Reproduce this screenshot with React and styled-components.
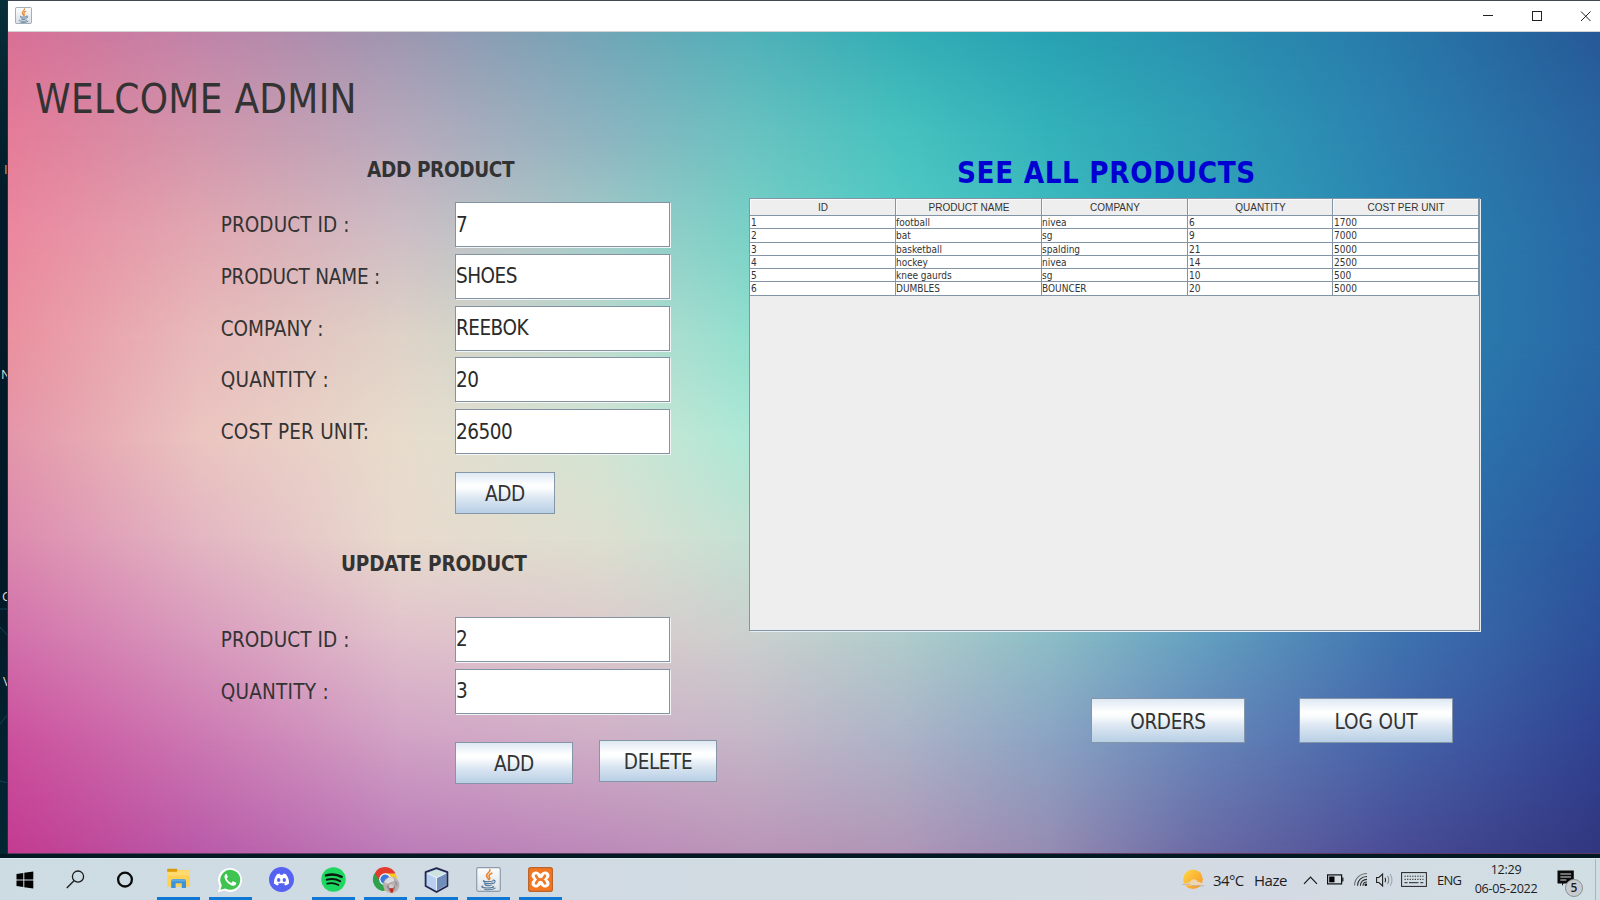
import React from 'react';
import styled, { createGlobalStyle } from 'styled-components';

const GlobalStyle = createGlobalStyle`
  * { box-sizing: border-box; }
  html, body { margin: 0; padding: 0; }
  body { width: 1600px; height: 900px; overflow: hidden; background: #021c28; }
`;

const FORM_FONT = '"DejaVu Sans Condensed", "DejaVu Sans", sans-serif';
const SHELL_FONT = '"Open Sans", "Noto Sans", sans-serif';

/* ---------- desktop and window ---------- */

const Screen = styled.div`
  width: 1600px;
  height: 900px;
  display: grid;
  grid-template-columns: 8px 1fr;
  grid-template-rows: 854px 4px 42px;
  background: #021923;
  overflow: hidden;
`;

const DesktopEdge = styled.div`
  position: relative;
  overflow: hidden;
  background: linear-gradient(180deg, #06303a 0, #042631 70px, #021b2a 200px, #021826 560px, #032633 854px);
  border-right: 1px solid #20303c;
`;

const DesktopLabel = styled.span`
  position: absolute;
  left: ${(p) => p.$x}px;
  top: ${(p) => p.$y}px;
  color: ${(p) => p.$color || '#d8d8d4'};
  font: 13px/14px ${SHELL_FONT};
`;

const DesktopLines = styled.svg`
  position: absolute;
  left: 0;
  top: 600px;
  width: 8px;
  height: 200px;
`;

const Window = styled.main`
  display: grid;
  grid-template-rows: 32px 1fr;
  min-width: 0;
`;

const TitleBar = styled.header`
  display: flex;
  align-items: center;
  background: #fff;
  border-top: 1px solid #3f4a54;
  border-bottom: 1px solid #d5d0d6;
  padding: 0 0 1px 7px;
`;

const Spacer = styled.div`
  flex: 1;
`;

const Caption = styled.svg`
  width: 12px;
  height: 12px;
  margin-right: ${(p) => p.$after}px;
  fill: none;
  stroke: #222;
`;

const Stage = styled.div`
  display: grid;
  overflow: hidden;
  border-bottom: 1px solid #5b3a62;
  & > * { grid-area: 1 / 1; }
`;

const Backdrop = styled.div`
  display: grid;
  width: 1592px;
  height: 821px;
  isolation: isolate;
  & > * { grid-area: 1 / 1; }
`;

const Band = styled.div`
  background: linear-gradient(90deg, ${(p) => p.$stops});
  ${(p) =>
    p.$to > 0 &&
    `mask-image: linear-gradient(180deg, transparent ${p.$from}px, #000 ${p.$to}px);`}
`;

const COLUMNS = [0, 192, 392, 592, 742, 892, 1042, 1192, 1392, 1592];
const BANDS = [
  [0, ['#d97095', '#c184a9', '#9e97b1', '#72a6b7', '#51b1b9', '#34aeb5', '#28a2b3', '#2a92b0', '#2878aa', '#265997']],
  [103, ['#e57c99', '#d295ab', '#b7a9bc', '#8db4c0', '#69c2c0', '#47c2bf', '#34b2ba', '#2fa0b6', '#2b80b0', '#29639f']],
  [208, ['#eb889f', '#e2a9b2', '#cfbfc5', '#a4cdc9', '#7ad2c7', '#55ccc6', '#3ebdc0', '#33a6ba', '#2a86b2', '#2868a4']],
  [308, ['#ea919f', '#e8babb', '#dfd3c7', '#c0dccf', '#93e0cf', '#70d6ca', '#4fc4c4', '#3caabb', '#2a84b1', '#2968a5']],
  [408, ['#e496aa', '#ebc5c0', '#e8dccd', '#d3e5d4', '#ade8d6', '#88dccf', '#60c8c8', '#46acbd', '#2c7caf', '#2961a3']],
  [508, ['#dc8aae', '#e3b6c2', '#e8dacd', '#dddfd0', '#c4e1d4', '#9fd8d0', '#7cc8ca', '#58aac0', '#3274ad', '#2a589e']],
  [608, ['#d26fab', '#d899bc', '#e0c0cb', '#dcc9cb', '#cbcfce', '#b0cbcb', '#8cbcc6', '#649fc0', '#3e72af', '#2d4f99']],
  [708, ['#cb509d', '#cc78b2', '#d1a2c5', '#cfafc7', '#c5b6c7', '#acb3c7', '#8aa3c3', '#6785b9', '#4563a8', '#304291']],
  [821, ['#c33b90', '#b95aa9', '#bb7cb8', '#bc89b9', '#ba95b8', '#b096b7', '#958bb2', '#6b6ba5', '#494b96', '#31367f']],
];

/* ---------- admin panel ---------- */

const Panel = styled.div`
  z-index: 1;
  display: grid;
  grid-template-columns: 741px 732px;
  font-family: ${FORM_FONT};
  font-stretch: condensed;
  color: #333;
`;

const Column = styled.section`
  display: flex;
  flex-direction: column;
  align-items: flex-start;
`;

const Welcome = styled.h1`
  margin: 44px 0 0 27px;
  font-size: 40px;
  line-height: 47px;
  font-weight: 400;
  letter-spacing: 0.3px;
  white-space: nowrap;
`;

const SectionTitle = styled.h2`
  margin: ${(p) => p.$top}px 0 ${(p) => p.$bottom}px ${(p) => p.$left}px;
  font-size: 20.5px;
  line-height: 24px;
  font-weight: 700;
  letter-spacing: ${(p) => p.$ls}px;
  white-space: nowrap;
`;

const Fields = styled.div`
  display: grid;
  row-gap: ${(p) => p.$gap}px;
  margin-left: 212px;
`;

const Row = styled.label`
  display: grid;
  grid-template-columns: 235px 215px;
  align-items: start;
  height: 45px;
  font-size: 20.5px;
  line-height: 46px;
  white-space: nowrap;
`;

const Caption_ = styled.span`
  padding-left: 0.7px;
  letter-spacing: ${(p) => p.$ls}px;
`;

const Input = styled.input`
  width: 215px;
  height: 45px;
  padding: 0;
  border: 1px solid #8393a3;
  border-radius: 0;
  outline: 0;
  background: #fff;
  box-shadow: 1px 1px 0 #f3f5f5;
  font-family: inherit;
  font-stretch: inherit;
  font-size: 20.5px;
  letter-spacing: -0.5px;
  color: #2b2b2b;
`;

const Button = styled.button`
  width: ${(p) => p.$w}px;
  height: ${(p) => p.$h || 42}px;
  margin-top: ${(p) => p.$drop || 0}px;
  padding: 2px 0 0;
  border: 1px solid #8496a8;
  border-radius: 0;
  background: linear-gradient(180deg, #dde8f3 0%, #fff 30%, #fafcfd 40%, #dce7f2 62%, #b8cfe5 100%);
  font: inherit;
  font-size: 20.5px;
  letter-spacing: ${(p) => p.$ls || -0.4}px;
  color: #333;
`;

const Actions = styled.div`
  display: flex;
  align-items: flex-start;
  gap: ${(p) => p.$gap || 0}px;
  margin: ${(p) => p.$top}px 0 0 ${(p) => p.$left}px;
`;

const ListTitle = styled.h2`
  margin: 124px 0 8px 208px;
  font-size: 29.3px;
  line-height: 34px;
  font-weight: 700;
  letter-spacing: 0.62px;
  color: #0000d2;
  white-space: nowrap;
`;

const ScrollPane = styled.div`
  width: 731px;
  height: 433px;
  background: #eee;
  border: 1px solid #8295a6;
  box-shadow: 1px 1px 0 #e7eef2;
`;

const Grid = styled.div`
  display: grid;
  grid-template-columns: 146px 146px 146px 145px 146px;
  width: 729px;
`;

const HeadCell = styled.div`
  height: 17px;
  padding-left: 1px;
  border-right: 1px solid #8295a6;
  border-bottom: 1px solid #8295a6;
  box-shadow: inset 1px 1px 0 #fafafa;
  text-align: center;
  font: 10px/18px "Liberation Sans", Arial, sans-serif;
  letter-spacing: 0;
`;

const Cell = styled.div`
  height: 13.3px;
  border-right: 1px solid #8295a6;
  border-bottom: 1px solid #8295a6;
  background: #fff;
  padding-left: ${(p) => (p.$first ? 1 : 0)}px;
  font-size: 10px;
  line-height: 13px;
`;

/* ---------- taskbar ---------- */

const Taskbar = styled.footer`
  grid-column: 1 / -1;
  grid-row: 3;
  display: flex;
  height: 42px;
  padding-right: 4px;
  border-top: 1px solid #dfe8eb;
  background: linear-gradient(90deg, #cddce3 0%, #d0dae2 30%, #d2dbe2 60%, #d4dae3 80%, #d0dfe4 100%);
  font-family: ${SHELL_FONT};
  color: #1d1d1f;
`;

const Launcher = styled.div`
  display: flex;
  align-items: center;
  justify-content: center;
  width: 50px;
`;

const AppButton = styled.div`
  display: flex;
  flex-direction: column;
  align-items: center;
  justify-content: space-between;
  width: 51.7px;
  padding-top: 8px;
  svg { display: block; }
  &::after {
    content: '';
    width: 43px;
    height: 3px;
    background: ${(p) => (p.$running ? '#0f78d4' : 'transparent')};
  }
`;

const Pinned = styled.div`
  display: flex;
  margin-left: 2.7px;
`;

const Tray = styled.div`
  display: flex;
  align-items: center;
  width: 414px;
  border-right: 1px solid #a9b5bb;
`;

const Slot = styled.div`
  flex: none;
  width: ${(p) => p.$w}px;
  height: 24px;
  display: flex;
  align-items: center;
  white-space: nowrap;
`;

const Weather = styled.span`
  font-size: 15px;
  letter-spacing: ${(p) => p.$ls}px;
`;

const Lang = styled.span`
  font-size: 13px;
  letter-spacing: -0.7px;
`;

const Clock = styled.div`
  flex: none;
  width: 72px;
  margin-right: 15px;
  margin-top: -1px;
  text-align: center;
  font-size: 12.6px;
  line-height: 19px;
  letter-spacing: -0.3px;
  white-space: nowrap;
`;

const Notice = styled.div`
  position: relative;
  width: 30px;
  height: 28px;
  padding-top: 4px;
`;

const Badge = styled.span`
  position: absolute;
  left: 8px;
  top: 13px;
  width: 18px;
  height: 18px;
  border: 1px solid #8b9093;
  border-radius: 50%;
  background: #c9cccf;
  font-size: 12px;
  font-weight: 600;
  line-height: 16px;
  text-align: center;
`;

/* ---------- icons ---------- */

const JavaIcon = ({ size }) => (
  <svg width={size} height={size} viewBox="0 0 25 25">
    <defs>
      <linearGradient id={`tile${size}`} x1="0" y1="0" x2="0" y2="1">
        <stop offset="0" stopColor="#fdfdfd" />
        <stop offset="1" stopColor="#d9e0e5" />
      </linearGradient>
    </defs>
    <rect x=".7" y=".7" width="23.6" height="23.6" rx="1.8" fill={`url(#tile${size})`} stroke="#8c9cab" strokeWidth="1.2" />
    <path d="M13.9 2.6c1 2.5-4.6 4-3.2 6.8.5 1 1.500 1.500 1.700 2.800M15.800 6.300c-2.200.9-3.700 2.200-2.300 4 .6.8.3 1.600-.4 2.300" fill="none" stroke="#e9822c" strokeWidth="1.600" strokeLinecap="round" />
    <path d="M8 13.500c-2 .8 1 1.200 4.300 1.100 2 0 4.200-.3 4.700-.7M8.300 15.600c-.5 1.300 6 1.300 7.800.4M8.900 17.700c.3 1.100 4.700 1.100 6.400.3M17 13.300c3-.6 2.700 2.600-.5 3.300M6.600 19c-3 1.400 3 2.200 7 1.900 3.300-.2 5-.9 3.300-1.600M8.800 22.500c4 .5 8.500.1 10.200-1.400" fill="none" stroke="#55799a" strokeWidth="1.200" strokeLinecap="round" />
  </svg>
);

const WindowsIcon = () => (
  <svg width="18" height="18" viewBox="0 0 18 18">
    <path d="M.5 2.900 7.300 2v6.600H.5zM8.300 1.800 17.300.5v8.100h-9zM.5 9.500h6.800V16L.5 15.100zM8.300 9.500h9v8l-9-1.300z" fill="#000" />
  </svg>
);

const SearchIcon = () => (
  <svg width="19" height="19" viewBox="0 0 19 19" fill="none" stroke="#1a1a1a" strokeWidth="1.300">
    <circle cx="12" cy="6.600" r="5.600" />
    <path d="M8 10.700.8 18" />
  </svg>
);

const CortanaIcon = () => (
  <svg width="18" height="18" viewBox="0 0 18 18">
    <circle cx="9" cy="8.600" r="6.900" fill="none" stroke="#0a0a0a" strokeWidth="2.300" />
  </svg>
);

const FolderIcon = () => (
  <svg width="25" height="25" viewBox="0 0 25 25">
    <path d="M1.200 2.600q0-.8.800-.8h8.500q.8 0 .8.800v3H1.200z" fill="#dc9a08" />
    <path d="M1.200 4.800h9.300l1.600-1.700h10.700q.9 0 .9.900v15.800H1.200z" fill="#ffd056" />
    <path d="M1.200 5.200h9.300l1.600-1.700h11.600v5H1.200z" fill="#ffda70" />
    <path d="M5.200 20.900v-6.500q0-2.200 2.200-2.200h10.400q2.200 0 2.200 2.200v6.500h-4.200v-4.700H9.600v4.700z" fill="#3c92d6" />
    <path d="M5.200 14.600q0-2.400 2.200-2.400h10.400q2.200 0 2.200 2.400z" fill="#58a9e4" />
  </svg>
);

const WhatsAppIcon = () => (
  <svg width="26" height="26" viewBox="0 0 26 26">
    <path d="M.8 25.300 2.600 19a12 12 0 1 1 4.800 4.600z" fill="#fff" />
    <path d="M3.500 22.700l1.300-4.500a10 10 0 1 1 3.600 3.400z" fill="#3fc351" />
    <path d="M9.200 7.100c-.9.200-1.800 1.200-1.700 2.900.2 3.700 5 8.500 8.600 8.700 1.800.1 2.900-1 3.100-2.100.1-.7 0-.8-.4-1l-2.400-1.200c-.4-.2-.7-.1-.9.200l-1.100 1.300c-2-.6-3.900-2.400-4.700-4.300l.9-1.200c.2-.3.2-.6.100-.9L9.900 7.500c-.1-.3-.4-.4-.7-.4z" fill="#fff" />
  </svg>
);

const DiscordIcon = () => (
  <svg width="25" height="25" viewBox="0 0 25 25">
    <circle cx="12.500" cy="12.500" r="12.500" fill="#5662f2" />
    <path d="M8 7.300 10.500 6.600l.6 1.100h2.900l.6-1.100L17 7.300c1.900 2.400 3.200 5.700 3.100 9.100-1.200 1-2.500 1.600-4 2l-.9-1.500 1-.6H8.800l1 .6-.9 1.500c-1.500-.4-2.800-1-4-2C4.800 13 6.100 9.700 8 7.300z" fill="#fff" />
    <ellipse cx="9.700" cy="13" rx="1.700" ry="1.900" fill="#5662f2" />
    <ellipse cx="15.300" cy="13" rx="1.700" ry="1.900" fill="#5662f2" />
  </svg>
);

const SpotifyIcon = () => (
  <svg width="25" height="25" viewBox="0 0 25 25">
    <circle cx="12.500" cy="12.500" r="12.200" fill="#1ed760" />
    <g fill="none" stroke="#08180d" strokeLinecap="round">
      <path d="M5 8.400c5-1.500 11.300-1 15.600 1.500" strokeWidth="2.500" />
      <path d="M5.700 12.700c4.400-1.200 9.700-.7 13.400 1.500" strokeWidth="2.100" />
      <path d="M6.200 16.600c3.900-.9 8-.5 11.300 1.400" strokeWidth="1.700" />
    </g>
  </svg>
);

const ChromeIcon = () => (
  <svg width="25" height="27" viewBox="0 0 25 27" overflow="visible">
    <path d="M12.200 12.300 1.400 6.600A11.600 11.600 0 0 0 11.500 24l6-9z" fill="#2da14b" />
    <path d="M12.200 12.300h11.500A11.600 11.600 0 0 1 11.500 24z" fill="#f9c623" />
    <path d="M12.200 6.200h9.800l1.700 3-.2 4h-10z" fill="#f9c623" />
    <path d="M1.700 6.400A11.600 11.600 0 0 1 22.500 6.600H12.200L7 14z" fill="#e33b2e" />
    <circle cx="12.200" cy="12.300" r="6" fill="#fff" />
    <circle cx="12.200" cy="12.300" r="4.800" fill="#3a78e0" />
    <circle cx="18.300" cy="18" r="8.200" fill="#b9b2b5" />
    <path d="M11.500 15q3-5 8-4.800l2 3.300-7 3.200z" fill="#dedcde" />
    <path d="M13.500 19.500q2-3.500 5-3t4 3.500l-1.500 4h-5z" fill="#948a8f" />
    <path d="M15.500 18q3-2 5.500.5l-1 2.500h-3.500z" fill="#d7cbc8" />
    <path d="m16.300 21.500 4-.3-.5 4.500h-2z" fill="#c52a1e" />
    <path d="m21.500 13 3 3-.5 4-2-3z" fill="#9a97a2" />
  </svg>
);

const CubeIcon = () => (
  <svg width="25" height="26" viewBox="0 0 25 26">
    <path d="M12.500 1.200 23.400 5.200V19L12.500 25 1.600 19V5.200z" fill="#a9c3ea" stroke="#24264e" strokeWidth="1.800" strokeLinejoin="round" />
    <path d="M12.500 2.700 22 6l-9.500 4.700L3 6z" fill="#cfe3df" />
    <path d="M2.900 6.600 12 11v12.300L2.900 18.300z" fill="#b9cff2" />
    <path d="M13 11l9.100-4.400v11.700L13 23.300z" fill="#6f8fba" />
    <path d="M3 6.200l9.500 4.600L22 6.200M12.500 10.800v12.500" fill="none" stroke="#f2f7fb" strokeWidth=".9" />
  </svg>
);

const XamppIcon = () => (
  <svg width="25" height="25" viewBox="0 0 25 25">
    <rect x=".6" y=".6" width="23.800" height="23.800" rx="2.200" fill="#f37623" stroke="#b9652b" strokeWidth="1.200" />
    <g fill="none" strokeLinecap="round">
      <path d="M7.700 8.600 17.300 16.400M17.300 8.600 7.700 16.400" stroke="#fff" strokeWidth="8.400" />
      <path d="M8 8.600q1.400 3.900 4.500 3.900T17 8.600M8 16.400q1.400-3.900 4.500-3.900t4.500 3.900" stroke="#f37623" strokeWidth="2.600" />
    </g>
  </svg>
);

const WeatherIcon = () => (
  <svg width="24" height="22" viewBox="0 0 24 22">
    <defs>
      <linearGradient id="sun" x1="0" y1="0" x2="1" y2="1">
        <stop offset="0" stopColor="#ffd84a" />
        <stop offset="1" stopColor="#f7931e" />
      </linearGradient>
    </defs>
    <circle cx="11" cy="10.200" r="9.800" fill="url(#sun)" />
    <path d="M1 16.600Q0 15 4 14l4-.8q1-3.300 4.500-3 2.500.2 3.300 2.600 2.200-.3 3.200 1l4 .9q.5 1-4 1.300l-4 .6z" fill="#ead9bd" opacity=".92" />
    <path d="M.3 15.300h8M9.500 16.800H22" stroke="#bfae9c" strokeWidth=".9" />
  </svg>
);

const ChevronIcon = () => (
  <svg width="15" height="10" viewBox="0 0 15 10">
    <path d="m1 8.800 6.500-6.700L14 8.800" fill="none" stroke="#1b1b1b" strokeWidth="1.200" />
  </svg>
);

const BatteryIcon = () => (
  <svg width="17" height="11" viewBox="0 0 17 11">
    <rect x=".6" y=".9" width="14" height="9" fill="none" stroke="#111" strokeWidth="1.200" />
    <rect x="2.200" y="2.500" width="5.300" height="5.800" fill="#000" />
    <path d="M15.800 3.500v4" stroke="#111" strokeWidth="1.200" />
  </svg>
);

const WifiIcon = () => (
  <svg width="15" height="15" viewBox="0 0 15 15" fill="none" stroke="#2a2d2f" strokeWidth="1.100">
    <path d="M.6 13.500C.6 6.500 6 1.500 13 1.500" stroke="#6b7276" />
    <path d="M3.500 13.700C3.500 8.200 7.500 4.500 13 4.500M6.400 13.700c0-3.700 2.700-6.300 6.600-6.300M9 13.700c0-2.200 1.500-3.700 4-3.700" />
    <circle cx="11.800" cy="12.700" r="1.300" fill="#111" stroke="none" />
  </svg>
);

const SpeakerIcon = () => (
  <svg width="18" height="16" viewBox="0 0 18 16" fill="none" stroke="#222" strokeWidth="1.100">
    <path d="M.6 5.500h2.300L6.600 2v12l-3.700-3.500H.6z" />
    <path d="M9 5.800q1.300 2.200 0 4.400" />
    <path d="M11.500 4q2.600 4 0 8" stroke="#7c8488" />
    <path d="M14 2q4 6 0 12" stroke="#9da6ab" />
  </svg>
);

const KeyboardIcon = () => (
  <svg width="26" height="15" viewBox="0 0 26 15" fill="none" stroke="#222">
    <rect x=".6" y=".6" width="24.800" height="13.800" />
    <path d="M3.500 4.200h19" strokeDasharray="1.300 1.250" />
    <path d="M3.500 7.300h19" strokeDasharray="1.300 1.250" />
    <path d="M3.500 10.700h3M8 10.700h9.500M19.300 10.700h3" />
  </svg>
);

const NoticeIcon = () => (
  <svg width="18" height="17" viewBox="0 0 18 17">
    <path d="M.5.500h16.300v13H6.500L5 16v-2.500H.5z" fill="#0a0a0a" />
    <path d="M3.300 4h10.800M3.300 7h10.800M3.300 10h6" stroke="#d3dce2" strokeWidth="1.100" />
  </svg>
);

/* ---------- data ---------- */

const PRODUCT_FIELDS = [
  ['PRODUCT ID :', '7', 0.08],
  ['PRODUCT NAME :', 'SHOES', -0.2],
  ['COMPANY :', 'REEBOK', 0],
  ['QUANTITY :', '20', 0.25],
  ['COST PER UNIT:', '26500', 0.2],
];

const UPDATE_FIELDS = [
  ['PRODUCT ID :', '2', 0.08],
  ['QUANTITY :', '3', 0.25],
];

const HEADINGS = ['ID', 'PRODUCT NAME', 'COMPANY', 'QUANTITY', 'COST PER UNIT'];

const PRODUCTS = [
  ['1', 'football', 'nivea', '6', '1700'],
  ['2', 'bat', 'sg', '9', '7000'],
  ['3', 'basketball', 'spalding', '21', '5000'],
  ['4', 'hockey', 'nivea', '14', '2500'],
  ['5', 'knee gaurds', 'sg', '10', '500'],
  ['6', 'DUMBLES', 'BOUNCER', '20', '5000'],
];

const APPS = [FolderIcon, WhatsAppIcon, DiscordIcon, SpotifyIcon, ChromeIcon, CubeIcon, () => <JavaIcon size={25} />, XamppIcon];

const FieldRows = ({ rows, gap }) => (
  <Fields $gap={gap}>
    {rows.map(([label, value, spacing]) => (
      <Row key={label}>
        <Caption_ $ls={spacing}>{label}</Caption_>
        <Input defaultValue={value} />
      </Row>
    ))}
  </Fields>
);

export default function App() {
  return (
    <>
      <GlobalStyle />
      <Screen>
        <DesktopEdge>
          <DesktopLabel $x={4} $y={162} $color="#d0a860">I</DesktopLabel>
          <DesktopLabel $x={1} $y={367}>N</DesktopLabel>
          <DesktopLabel $x={2} $y={589}>C</DesktopLabel>
          <DesktopLabel $x={3} $y={674}>V</DesktopLabel>
          <DesktopLines viewBox="0 0 8 200" fill="none" stroke="#124354">
            <path d="M0 9h8M0 27l8 9M0 124l8-10M0 181l8 2" />
          </DesktopLines>
        </DesktopEdge>

        <Window>
          <TitleBar>
            <JavaIcon size={17} />
            <Spacer />
            <Caption $after={37} viewBox="0 0 12 12"><path d="M1 5.500h10" /></Caption>
            <Caption $after={37} viewBox="0 0 12 12"><rect x="1.500" y="1.500" width="9" height="9" /></Caption>
            <Caption $after={8} viewBox="0 0 12 12"><path d="m1 1.500 9.500 9.500M10.500 1.500 1 11" /></Caption>
          </TitleBar>

          <Stage>
            <Backdrop>
              {BANDS.map(([y, colors], i) => (
                <Band
                  key={y}
                  $from={i ? BANDS[i - 1][0] : 0}
                  $to={y}
                  $stops={colors.map((c, k) => `${c} ${COLUMNS[k]}px`).join(', ')}
                />
              ))}
            </Backdrop>

            <Panel>
              <Column>
                <Welcome>WELCOME ADMIN</Welcome>
                <SectionTitle $top={35} $bottom={20} $left={359} $ls={-0.35}>ADD PRODUCT</SectionTitle>
                <FieldRows rows={PRODUCT_FIELDS} gap={6.8} />
                <Actions $top={17.800} $left={447}>
                  <Button $w={100}>ADD</Button>
                </Actions>
                <SectionTitle $top={38} $bottom={40.800} $left={333} $ls={-0.15}>UPDATE PRODUCT</SectionTitle>
                <FieldRows rows={UPDATE_FIELDS} gap={6.8} />
                <Actions $top={26.400} $left={447} $gap={26}>
                  <Button $w={118} $drop={2}>ADD</Button>
                  <Button $w={118}>DELETE</Button>
                </Actions>
              </Column>

              <Column>
                <ListTitle>SEE ALL PRODUCTS</ListTitle>
                <ScrollPane>
                  <Grid>
                    {HEADINGS.map((h) => <HeadCell key={h}>{h}</HeadCell>)}
                    {PRODUCTS.map((row) => row.map((v, i) => (
                      <Cell key={row[0] + HEADINGS[i]} $first={i === 0 || i > 2}>{v}</Cell>
                    )))}
                  </Grid>
                </ScrollPane>
                <Actions $top={67} $left={342} $gap={54}>
                  <Button $w={154} $h={45}>ORDERS</Button>
                  <Button $w={154} $h={45} $ls={-0.05}>LOG OUT</Button>
                </Actions>
              </Column>
            </Panel>
          </Stage>
        </Window>

        <Taskbar>
          <Launcher><WindowsIcon /></Launcher>
          <Launcher><SearchIcon /></Launcher>
          <Launcher><CortanaIcon /></Launcher>
          <Pinned>
            {APPS.map((Icon, i) => (
              <AppButton key={i} $running={i !== 2}><Icon /></AppButton>
            ))}
          </Pinned>
          <Spacer />
          <Tray>
            <Slot $w={31}><WeatherIcon /></Slot>
            <Slot $w={41}><Weather $ls={-0.6}>34°C</Weather></Slot>
            <Slot $w={49}><Weather $ls={-0.5}>Haze</Weather></Slot>
            <Slot $w={24}><ChevronIcon /></Slot>
            <Slot $w={27}><BatteryIcon /></Slot>
            <Slot $w={22}><WifiIcon /></Slot>
            <Slot $w={25}><SpeakerIcon /></Slot>
            <Slot $w={36}><KeyboardIcon /></Slot>
            <Slot $w={33}><Lang>ENG</Lang></Slot>
            <Clock>12:29<br />06-05-2022</Clock>
            <Notice>
              <NoticeIcon />
              <Badge>5</Badge>
            </Notice>
          </Tray>
        </Taskbar>
      </Screen>
    </>
  );
}
